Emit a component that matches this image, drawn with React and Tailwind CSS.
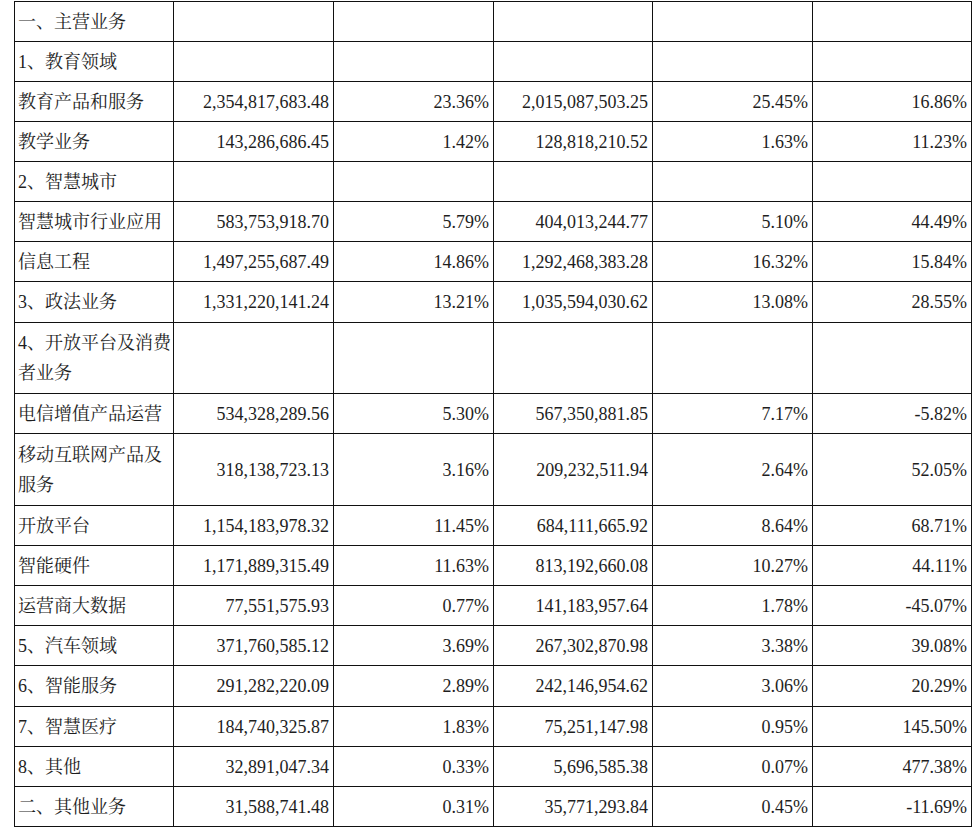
import React from "react";

const rows = [
  { h: "h-[40px]", label: "一、主营业务", v: [] },
  { h: "h-[40px]", label: "1、教育领域", v: [] },
  { h: "h-[40px]", label: "教育产品和服务", v: ["2,354,817,683.48", "23.36%", "2,015,087,503.25", "25.45%", "16.86%"] },
  { h: "h-[40px]", label: "教学业务", v: ["143,286,686.45", "1.42%", "128,818,210.52", "1.63%", "11.23%"] },
  { h: "h-[40px]", label: "2、智慧城市", v: [] },
  { h: "h-[40px]", label: "智慧城市行业应用", v: ["583,753,918.70", "5.79%", "404,013,244.77", "5.10%", "44.49%"] },
  { h: "h-[40px]", label: "信息工程", v: ["1,497,255,687.49", "14.86%", "1,292,468,383.28", "16.32%", "15.84%"] },
  { h: "h-[41px]", label: "3、政法业务", v: ["1,331,220,141.24", "13.21%", "1,035,594,030.62", "13.08%", "28.55%"] },
  { h: "h-[71px]", label: ["4、开放平台及消费", "者业务"], v: [] },
  { h: "h-[40px]", label: "电信增值产品运营", v: ["534,328,289.56", "5.30%", "567,350,881.85", "7.17%", "-5.82%"] },
  { h: "h-[72px]", label: ["移动互联网产品及", "服务"], v: ["318,138,723.13", "3.16%", "209,232,511.94", "2.64%", "52.05%"] },
  { h: "h-[40px]", label: "开放平台", v: ["1,154,183,978.32", "11.45%", "684,111,665.92", "8.64%", "68.71%"] },
  { h: "h-[40px]", label: "智能硬件", v: ["1,171,889,315.49", "11.63%", "813,192,660.08", "10.27%", "44.11%"] },
  { h: "h-[40px]", label: "运营商大数据", v: ["77,551,575.93", "0.77%", "141,183,957.64", "1.78%", "-45.07%"] },
  { h: "h-[40px]", label: "5、汽车领域", v: ["371,760,585.12", "3.69%", "267,302,870.98", "3.38%", "39.08%"] },
  { h: "h-[41px]", label: "6、智能服务", v: ["291,282,220.09", "2.89%", "242,146,954.62", "3.06%", "20.29%"] },
  { h: "h-[40px]", label: "7、智慧医疗", v: ["184,740,325.87", "1.83%", "75,251,147.98", "0.95%", "145.50%"] },
  { h: "h-[40px]", label: "8、其他", v: ["32,891,047.34", "0.33%", "5,696,585.38", "0.07%", "477.38%"] },
  { h: "h-[40px]", label: "二、其他业务", v: ["31,588,741.48", "0.31%", "35,771,293.84", "0.45%", "-11.69%"] },
];

export default function App() {
  return (
    <div className="w-[975px] h-[828px] bg-white overflow-hidden pt-px pl-[14px] text-[#1e1e1e] [font-family:'Liberation_Serif','Noto_Serif_CJK_SC','Noto_Sans_CJK_SC',serif]">
      <table className="table-fixed border-collapse text-[18px] leading-[30px]">
        <colgroup>
          <col className="w-[159px]" />
          <col className="w-[160px]" />
          <col className="w-[160px]" />
          <col className="w-[159px]" />
          <col className="w-[160px]" />
          <col className="w-[159px]" />
        </colgroup>
        <tbody>
          {rows.map((r, i) => (
            <tr key={i} className={r.h}>
              <td className="border border-[#111] pl-[3px] pr-[2px] py-0 align-middle whitespace-nowrap">
                {Array.isArray(r.label) ? (
                  <>
                    {r.label[0]}
                    <br />
                    {r.label[1]}
                  </>
                ) : (
                  r.label
                )}
              </td>
              {[0, 1, 2, 3, 4].map((j) => (
                <td key={j} className="border border-[#111] pr-[4px] pl-[2px] py-0 text-right align-middle whitespace-nowrap">
                  {r.v[j] || ""}
                </td>
              ))}
            </tr>
          ))}
        </tbody>
      </table>
    </div>
  );
}
